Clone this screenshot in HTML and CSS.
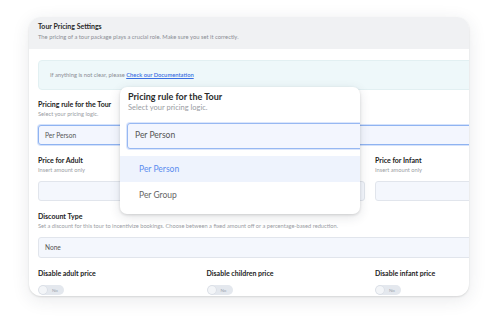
FILE: index.html
```html
<!DOCTYPE html>
<html>
<head>
<meta charset="utf-8">
<link rel="stylesheet" href="styles.css">
</head>
<body>
<div class="stage">
  <div class="card">
    <div class="card-head">
      <div class="head-title">Tour Pricing Settings</div>
      <div class="head-sub">The pricing of a tour package plays a crucial role. Make sure you set it correctly.</div>
    </div>
    <div class="card-body">
      <div class="info">If anything is not clear, please <a class="doc-link">Check our Documentation</a></div>

      <div class="field">
        <div class="label">Pricing rule for the Tour</div>
        <div class="desc">Select your pricing logic.</div>
        <div class="input select-active">Per Person</div>
      </div>

      <div class="cols">
        <div class="field">
          <div class="label">Price for Adult</div>
          <div class="desc">Insert amount only</div>
          <div class="input"></div>
        </div>
        <div class="field">
          <div class="label">Price for Child</div>
          <div class="desc">Insert amount only</div>
          <div class="input"></div>
        </div>
        <div class="field">
          <div class="label">Price for Infant</div>
          <div class="desc">Insert amount only</div>
          <div class="input"></div>
        </div>
      </div>

      <div class="field">
        <div class="label">Discount Type</div>
        <div class="desc">Set a discount for this tour to incentivize bookings. Choose between a fixed amount off or a percentage-based reduction.</div>
        <div class="input taller">None</div>
      </div>

      <div class="cols toggles">
        <div class="tfield">
          <div class="label">Disable adult price</div>
          <div class="toggle"><span class="knob"></span><span class="tlabel">No</span></div>
        </div>
        <div class="tfield">
          <div class="label">Disable children price</div>
          <div class="toggle"><span class="knob"></span><span class="tlabel">No</span></div>
        </div>
        <div class="tfield">
          <div class="label">Disable infant price</div>
          <div class="toggle"><span class="knob"></span><span class="tlabel">No</span></div>
        </div>
      </div>
    </div>
  </div>

  <div class="popup">
    <div class="pop-title">Pricing rule for the Tour</div>
    <div class="pop-desc">Select your pricing logic.</div>
    <div class="pop-select">Per Person</div>
    <div class="pop-options">
      <div class="opt opt-active">Per Person</div>
      <div class="opt">Per Group</div>
    </div>
  </div>
</div>
</body>
</html>
```

FILE: styles.css
```css
* { box-sizing: border-box; }
html, body { margin: 0; padding: 0; background: #ffffff; }
body {
  width: 498px;
  height: 316px;
  overflow: hidden;
  font-family: Lato, "Open Sans", sans-serif;
  color: #222;
}
.stage {
  position: relative;
  width: 498px;
  height: 316px;
  padding: 17px 0 0 29px;
}
.card {
  width: 440px;
  height: 279px;
  border-radius: 12px;
  background: #fff;
  overflow: hidden;
  box-shadow: 0 1px 2px rgba(0,0,0,0.12), 0 4px 18px rgba(40,50,70,0.10);
}
.card-head {
  background: #f0f1f3;
  height: 32px;
  padding: 4px 0 0 9px;
}
.head-title {
  font-size: 7px;
  line-height: 10px;
  font-weight: 700;
  color: #2a2a2a;
}
.head-sub {
  margin-top: 2px;
  font-size: 5.8px;
  line-height: 8px;
  color: #8a8d93;
  white-space: nowrap;
}
.card-body {
  width: 496px;
  padding: 11px 0 0 9px;
}
.info {
  width: 487px;
  height: 30px;
  background: #eef8fa;
  border: 1px solid #e2f0f2;
  border-radius: 4px;
  padding-left: 11px;
  font-size: 5.8px;
  line-height: 28px;
  color: #8a8d93;
}
.doc-link {
  color: #3a6fe2;
  text-decoration: underline;
  font-weight: 600;
}
.field { margin-top: 9px; }
.cols {
  display: grid;
  grid-template-columns: 158.5px 158.5px 158.5px;
  column-gap: 10px;
  margin-top: 10px;
}
.cols .field { margin-top: 0; }
.label {
  font-size: 7px;
  line-height: 10px;
  font-weight: 700;
  color: #222;
  white-space: nowrap;
}
.desc {
  font-size: 5.7px;
  line-height: 9px;
  color: #9a9da3;
  white-space: nowrap;
}
.input {
  margin-top: 7px;
  height: 20px;
  background: #f4f7fd;
  border: 1px solid #e1e5ec;
  border-radius: 3px;
  padding-left: 6px;
  font-size: 6.6px;
  line-height: 18px;
  color: #555;
}
.field + .cols, .cols + .field { margin-top: 10px; }
.select-active {
  width: 487px;
  border: 1px solid #8fb3f1;
  box-shadow: 0 0 0 1px #d4e2fb;
  background: #f3f6fe;
}
.taller { height: 21px; line-height: 19px; width: 487px; margin-top: 7px; }
.toggles { margin-top: 9px; }
.toggle {
  margin-top: 7px;
  width: 26px;
  height: 10px;
  border-radius: 5px;
  background: #e4e8ee;
  display: flex;
  align-items: center;
  padding-left: 1px;
}
.knob {
  width: 8px;
  height: 8px;
  border-radius: 50%;
  background: #f3f5f8;
  box-shadow: 0 0 0 0.5px #d2d7df;
}
.tlabel {
  font-size: 4.5px;
  color: #a0a6b0;
  margin-left: 5px;
}
.popup {
  position: absolute;
  left: 120px;
  top: 87px;
  width: 240px;
  height: 127px;
  background: #fff;
  border-radius: 7px;
  overflow: hidden;
  box-shadow: 0 1px 3px rgba(0,0,0,0.14), 0 3px 12px rgba(30,40,60,0.12);
  padding-top: 4px;
}
.pop-title {
  padding-left: 8px;
  font-size: 9px;
  line-height: 11px;
  font-weight: 700;
  color: #2a2a2a;
  white-space: nowrap;
}
.pop-desc {
  padding-left: 8px;
  margin-top: 1px;
  font-size: 7.5px;
  line-height: 10px;
  color: #9a9da3;
  white-space: nowrap;
}
.pop-select {
  margin: 10px 0 0 7px;
  width: 260px;
  height: 26px;
  border: 1.5px solid #97b8f2;
  border-radius: 3px;
  background: #f3f6fe;
  box-shadow: 0 0 0 1px #dbe6fb;
  padding-left: 7px;
  font-size: 8.5px;
  line-height: 23px;
  color: #555;
}
.pop-options { margin-top: 7px; }
.opt {
  height: 26px;
  padding-left: 19px;
  font-size: 8.5px;
  line-height: 26px;
  color: #666;
}
.opt-active {
  background: #eef3fd;
  color: #5b8def;
}
```
